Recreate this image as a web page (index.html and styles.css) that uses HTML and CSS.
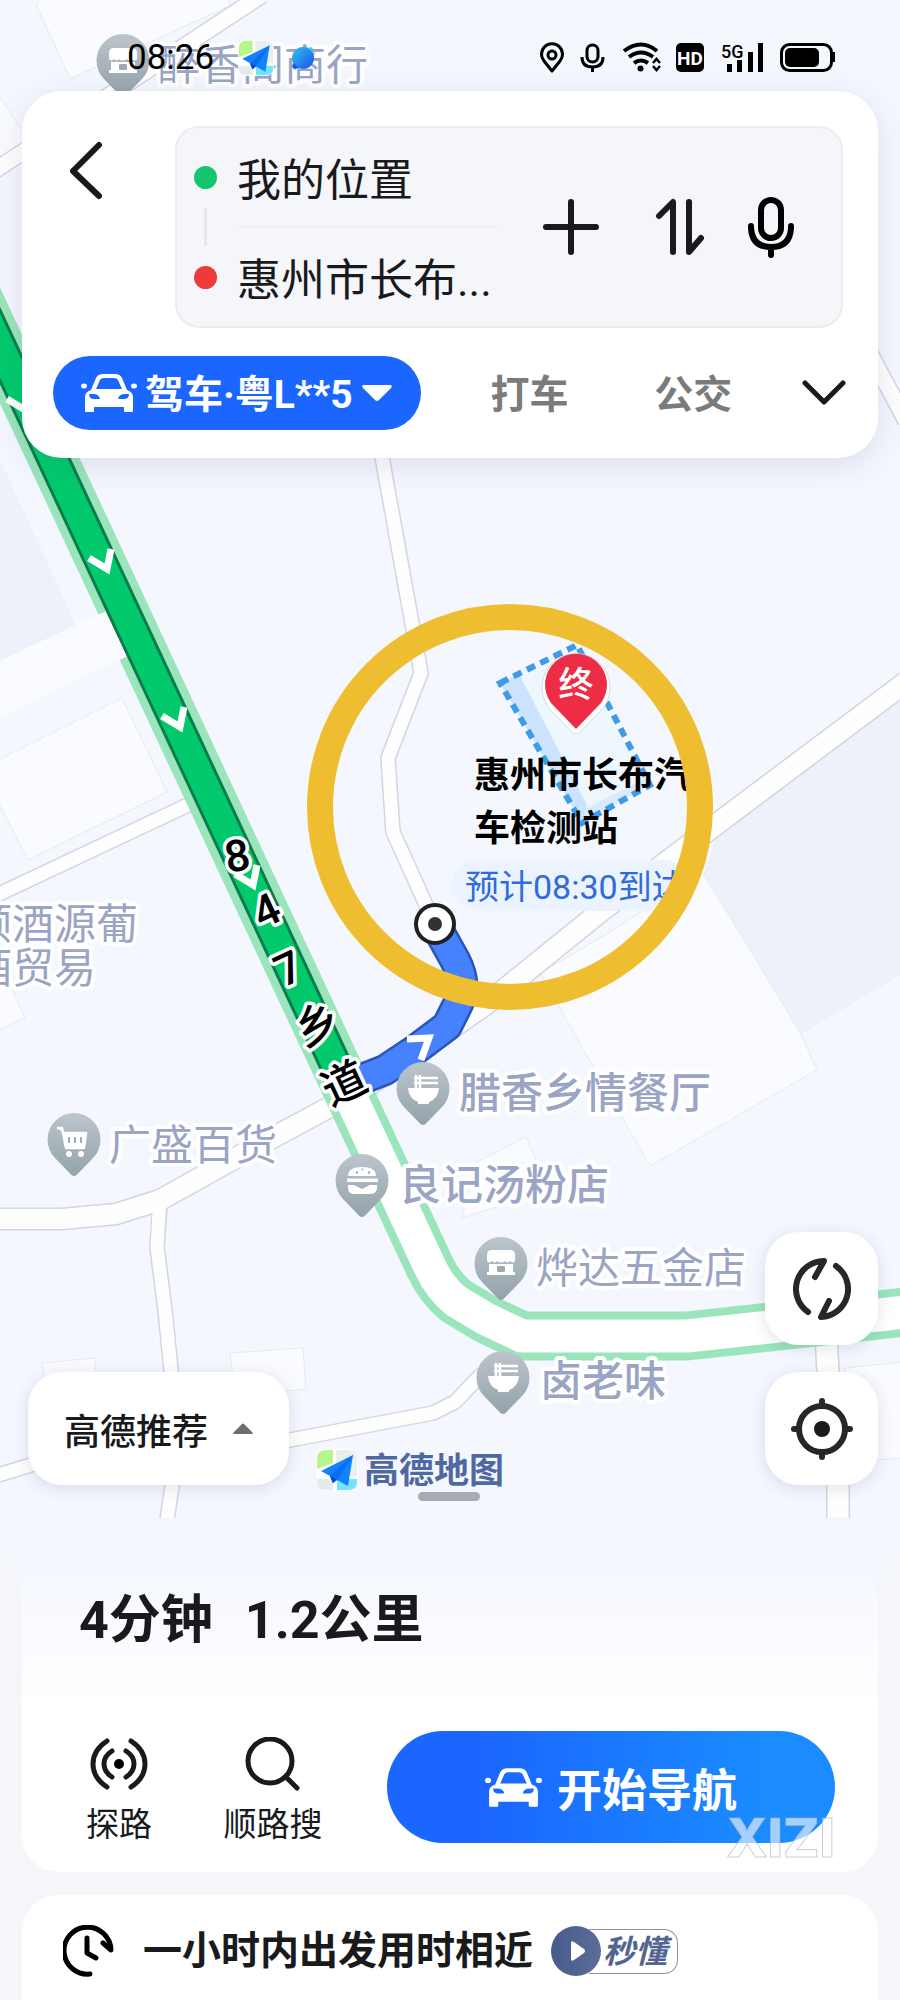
FILE: index.html
```html
<!DOCTYPE html>
<html lang="zh-CN">
<head>
<meta charset="utf-8">
<meta name="viewport" content="width=device-width, initial-scale=1">
<title>高德地图</title>
<link rel="stylesheet" href="styles.css">
</head>
<body>
<svg class="defs" aria-hidden="true">
  <defs>
    <linearGradient id="pinFill" x1="0" y1="0" x2="0" y2="1">
      <stop offset="0" stop-color="#bcc5cb"/><stop offset="1" stop-color="#93a2aa"/>
    </linearGradient>
    <linearGradient id="planetFill" x1="0" y1="0" x2="1" y2="1">
      <stop offset="0" stop-color="#2fc4ee"/><stop offset="1" stop-color="#1d50e8"/>
    </linearGradient>
    <symbol id="pin" viewBox="-28 -28 56 68" overflow="visible">
      <path d="M0 36C-1.500 36-2.500 35-3.500 34L-19 18A26.500 26.500 0 1 1 19 18L3.500 34C2.500 35 1.500 36 0 36Z" fill="url(#pinFill)"/>
    </symbol>
    <symbol id="shop" viewBox="-15 -15 30 30" overflow="visible">
      <path d="M-14-8q0-5 5-5H9q5 0 5 5v6q-2 3-5 0-3 3-5 0-4 3-8 0-2 3-5 0-3 3-5 0Z" fill="#fff"/>
      <path d="M-12 1H12V9H14V12H-14V9H-12Z" fill="#fff"/><rect x="-4" y="3" width="8" height="6" rx="1" fill="#9cabb3"/>
    </symbol>
    <symbol id="bowl" viewBox="-15 -15 30 30" overflow="visible">
      <path d="M-15-2H16Q15 9 6 12v2H-5v-2Q-14 9-15-2Z" fill="#fff"/>
      <path d="M-7-15V-2M-3-15V-2M-9-12H15M-9-7H15" stroke="#fff" stroke-width="2.500"/>
    </symbol>
    <symbol id="car" viewBox="0 0 56 40">
      <path fill-rule="evenodd" d="M10 17 15 5Q17 1 22 1H34Q39 1 41 5L46 17Q52 19 52 24V38Q52 39 51 39H44Q43 39 43 38V34H13V38Q13 39 12 39H5Q4 39 4 38V24Q4 19 10 17ZM15 16H41L37 7Q36 5 33 5H23Q20 5 19 7ZM8 21Q8 26 13 26H19Q18 21 12 21ZM48 21Q48 26 43 26H37Q38 21 44 21Z" fill="#fff"/>
      <ellipse cx="3" cy="13" rx="3" ry="2.500" fill="#fff"/><ellipse cx="53" cy="13" rx="3" ry="2.500" fill="#fff"/>
    </symbol>
    <symbol id="amap" viewBox="0 0 42 42">
      <rect width="42" height="42" rx="10" fill="#fff"/>
      <path d="M1 20V10Q1 1 10 1H17V14L1 20Z" fill="#b9f58d"/>
      <path d="M20 1H32Q41 1 41 10V27H20Z" fill="#e9eeee"/>
      <path d="M1 30H17V41H10Q1 41 1 33Z" fill="#e5eaea"/>
      <path d="M21 30H41V33Q41 41 32 41H21Z" fill="#77e2fb"/>
      <path d="M37 6 5 22 14 27 17 34 21 31 32 37Z" fill="#1182fa"/>
      <path d="M14 27 17 34 21 31 37 6Z" fill="#0a6cf0"/>
      <path d="M14 27 17 34 20 30Z" fill="#0a45d0"/>
    </symbol>
    <path id="chev" d="M-14-6 4 5 8-15" fill="none" stroke="#fff" stroke-width="7"/>
  </defs>
</svg>

<div class="screen">
  <main class="map">
    <svg class="map-canvas" viewBox="0 0 900 1518" preserveAspectRatio="xMidYMin slice" role="img" aria-label="路线地图">
      <g class="block">
        <path d="M36 4 44-2H228L231 5 70 79Z"/>
        <path d="M-2 95 22 130V150L-2 160Z"/>
        <path class="shade" d="M-2 455 60 590 75 625-2 662Z"/>
        <path d="M-2 760 122 698 167 792 28 860-2 802Z"/>
        <path d="M-2 958 25 1018-2 1030Z"/>
        <path class="shade" d="M703 873 725 818 902 700V974L801 1034Z"/>
        <path d="M540 973 600 938 703 873 801 1034 817 1070 650 1166Z"/>
        <path d="M475 1163 526 1137 550 1190 462 1218Z"/>
        <path d="M42 1363 95 1358 96 1410 50 1410Z"/>
        <path d="M230 1353 303 1348 306 1389 235 1395Z"/>
        <path d="M845 1368 902 1362V1458L850 1462Z"/>
      </g>
      <g class="street-edge">
        <path class="w16" d="M262-5-6 171"/>
        <path class="w16" d="M866 346 906 421"/>
        <path class="w14" d="M-5 896 190 804"/>
        <path class="w14" d="M380 446 406 590 421 673 388 758 393 832 432 918"/>
        <path class="w20" d="M906 682 750 799 600 912 485 1005 365 1088 250 1150 160 1200 116 1214 62 1219H-5"/>
        <path class="w14" d="M160 1204 157 1247 165 1310 172 1380 174 1440 172 1486 167 1520"/>
        <path class="w14" d="M-5 1476 80 1450 180 1458 290 1440 433 1413 455 1402 480 1376 520 1355"/>
        <path class="w22" d="M826 1335 828 1372 838 1486 838 1520"/>
      </g>
      <g class="street">
        <path class="w16" d="M262-5-6 171"/>
        <path class="w16" d="M866 346 906 421"/>
        <path class="w14" d="M-5 896 190 804"/>
        <path class="w14" d="M380 446 406 590 421 673 388 758 393 832 432 918"/>
        <path class="w20" d="M906 682 750 799 600 912 485 1005 365 1088 250 1150 160 1200 116 1214 62 1219H-5"/>
        <path class="w14" d="M160 1196 157 1247 165 1310 172 1380 174 1440 172 1486 167 1520"/>
        <path class="w14" d="M-5 1476 80 1450 180 1458 290 1440 433 1413 455 1402 480 1376 520 1355"/>
        <path class="w22" d="M826 1335 828 1372 838 1486 838 1520"/>
      </g>
      <g class="line">
        <path stroke="#9ae5bb" stroke-width="49" d="M-73 189 360 1117 402 1207 430 1267Q440 1288 456 1301L486 1319 522 1336H687L906 1312"/>
        <path stroke="#fff" stroke-width="33" d="M-73 189 360 1117 402 1207 430 1267Q440 1288 456 1301L486 1319 522 1336H687L906 1312"/>
      </g>
      <path class="block-strip" d="M-2 662 108 610 130 655-2 718Z"/>
      <g class="line">
        <path stroke="#2b55b4" stroke-width="32" d="M435 924 455 960Q468 985 458 1004L447 1026 415 1050 385 1070 362 1079"/>
        <path stroke="#4682fd" stroke-width="27" d="M435 924 455 960Q468 985 458 1004L447 1026 415 1050 385 1070 362 1079"/>
        <path stroke="#077c4d" stroke-width="33" d="M-73 189 338 1070"/>
        <path stroke="#02ca6c" stroke-width="27" d="M-73 189 337 1068"/>
      </g>
      <use href="#chev" x="21" y="405"/><use href="#chev" x="103" y="564"/><use href="#chev" x="176" y="722"/><use href="#chev" x="249" y="880"/>
      <path d="M407 1039 429 1038 421 1060" fill="none" stroke="#fff" stroke-width="7"/>

      <g>
        <path d="M500 683 577 645 650 785 582 823Z" fill="#eef6fe"/>
        <path d="M500 683 519 674 587 805 582 823Z" fill="#cbe3fd"/>
        <path d="M582 823 587 808 646 778 650 785Z" fill="#d8eafd"/>
        <path d="M500 683 577 645 650 785 582 823Z" fill="none" stroke="#3f9be6" stroke-width="6" stroke-dasharray="9 6"/>
        <path d="M576 734Q573 734 571 731L548 707A34 34 0 1 1 604 707L581 731Q579 734 576 734Z" fill="#fff" stroke="#d9dde5" stroke-width="1"/>
        <path d="M576 729 551 703A31 31 0 1 1 601 703Z" fill="#ee2c45"/>
        <text class="end-mark" x="576" y="697" text-anchor="middle">终</text>
      </g>
      <g class="dest"><text x="474" y="788">惠州市长布汽</text><text x="474" y="841">车检测站</text></g>
      <rect x="452" y="860" width="238" height="51" rx="25" fill="#ebf4fe"/>
      <text class="eta" x="465" y="899">预计08:30到达</text>
      <circle cx="435" cy="924" r="19" fill="#fff" stroke="#1f2023" stroke-width="4"/><circle cx="435" cy="924" r="7" fill="#303236"/>
      <circle cx="510" cy="807" r="190" fill="none" stroke="#efbe30" stroke-width="26"/>

      <g class="road-name" text-anchor="middle">
        <text transform="translate(237 855) rotate(-10)" y="16">8</text>
        <text transform="translate(266 910) rotate(-25)" y="16">4</text>
        <text transform="translate(288 968) rotate(-25)" y="16">7</text>
        <text transform="translate(317 1024) rotate(-25)" y="16">乡</text>
        <text transform="translate(344 1083) rotate(-25)" y="16">道</text>
      </g>

      <g class="poi">
        <use href="#pin" x="95" y="33" width="56" height="68"/><use href="#shop" x="108" y="46" width="30" height="30"/>
        <text x="158" y="80">醉香阁商行</text>
        <text x="-30" y="939">顺酒源葡</text><text x="-30" y="983">酒贸易</text>
        <use href="#pin" x="46" y="1112" width="56" height="68"/>
        <path d="M57 1128h5l4 20h18l2-15H64" fill="#fff" stroke="#fff" stroke-width="2.500" stroke-linejoin="round"/>
        <path d="M69 1137v6M75 1137v6M81 1137v6" stroke="#9cabb3" stroke-width="2"/><circle cx="69" cy="1154" r="3" fill="#fff"/><circle cx="81" cy="1154" r="3" fill="#fff"/>
        <text x="109" y="1160">广盛百货</text>
        <use href="#pin" x="395" y="1061" width="56" height="68"/><use href="#bowl" x="408" y="1075" width="30" height="30"/>
        <text class="strong" x="459" y="1108">腊香乡情餐厅</text>
        <use href="#pin" x="334" y="1153" width="56" height="68"/>
        <path d="M348 1176Q348 1167 362 1167T376 1176ZM347 1178.500H378V1182H347ZM348 1185H354L362 1189 370 1185H377Q378 1194 370 1194H354Q347 1194 348 1185Z" fill="#fff"/>
        <path d="M356 1173l2-1M362 1170l1-1M368 1173l2-1" stroke="#9cabb3" stroke-width="2"/>
        <text class="strong" x="399" y="1200">良记汤粉店</text>
        <use href="#pin" x="473" y="1236" width="56" height="68"/><use href="#shop" x="486" y="1248" width="30" height="30"/>
        <text x="536" y="1283">烨达五金店</text>
        <use href="#pin" x="475" y="1350" width="56" height="68"/><use href="#bowl" x="488" y="1363" width="30" height="30"/>
        <text class="strong" x="540" y="1396">卤老味</text>
      </g>
    </svg>

    <header class="status">
      <time class="clock">08:26</time>
      <svg width="36" height="36" viewBox="0 0 42 42" aria-hidden="true"><use href="#amap"/></svg>
      <svg class="planet" width="26" height="26" viewBox="0 0 26 26" aria-hidden="true"><circle cx="13" cy="13" r="11" fill="url(#planetFill)"/><path d="M18 3Q24 0 23 8Z" fill="#38c8ef"/><path d="M3 18Q0 26 9 23Z" fill="#1d55e8"/></svg>
      <svg class="status-icons" width="296" height="32" viewBox="540 42 296 32" role="img" aria-label="定位 麦克风 无线网 HD 5G 电量">
        <g fill="none" stroke="#000" stroke-width="3">
          <path d="M552 71 544 61A10.500 10.500 0 1 1 560 61Z" stroke-linejoin="round"/><circle cx="552" cy="55" r="4"/>
          <rect x="587" y="45" width="11" height="17" rx="5.500"/><path d="M582 57Q582 67 592.500 67T603 57M592.500 67V72"/>
          <path d="M624 51Q641 38 657 51" stroke-width="4"/><path d="M629 57Q641 48 653 57M634 63Q641 58 648 63" stroke-width="4"/>
          <path d="M653 63l3.500-4 3.500 4M653 66l3.500 4 3.500-4" stroke-width="2.500"/>
          <rect x="781.500" y="44.500" width="50" height="26" rx="8"/>
        </g>
        <circle cx="640.500" cy="68.500" r="3"/>
        <rect x="676" y="43" width="28" height="29" rx="5"/><text class="hd" x="690" y="65" text-anchor="middle">HD</text>
        <text class="fiveg" x="721" y="58">5G</text>
        <path d="M727 64h5v8h-5ZM737 60h5v12h-5ZM748 52h5v20h-5ZM758 43h5v29h-5Z"/>
        <rect x="785" y="48" width="34" height="19" rx="5"/><path d="M833 52h2v10h-2Z"/>
      </svg>
    </header>

    <section class="route-card" aria-label="路线规划">
      <div class="route-top">
        <button class="icon-btn back" type="button" aria-label="返回"><svg width="34" height="60" viewBox="0 0 34 60"><path d="M30 4 4 30 30 55"/></svg></button>
        <div class="route-box">
          <div class="points">
            <label class="point"><span class="dot start"></span><input type="text" aria-label="起点" value="我的位置"></label>
            <div class="joiner"></div>
            <label class="point"><span class="dot end"></span><input type="text" aria-label="终点" value="惠州市长布..."></label>
          </div>
          <div class="tools">
            <button class="icon-btn" type="button" aria-label="添加途经点"><svg width="56" height="62" viewBox="0 0 56 62"><path d="M28 6V56M3 31H53"/></svg></button>
            <button class="icon-btn" type="button" aria-label="交换起终点"><svg width="50" height="62" viewBox="0 0 50 62"><path d="M4 20 18 6V56M34 6V56L46 42"/></svg></button>
            <button class="icon-btn voice" type="button" aria-label="语音"><svg width="46" height="62" viewBox="0 0 46 62"><rect x="13" y="4" width="20" height="38" rx="10"/><path d="M3 30V32Q4 51 23 51T43 32V30M23 51V59"/></svg></button>
          </div>
        </div>
      </div>
      <nav class="modes" aria-label="出行方式">
        <button class="mode active" type="button"><svg width="56" height="40"><use href="#car"/></svg><span>驾车·粤L**5</span><svg class="caret" width="32" height="18" viewBox="0 0 32 18"><path d="M3 1H29Q32 1 30 4L18 16Q16 18 14 16L2 4Q0 1 3 1Z"/></svg></button>
        <button class="mode taxi" type="button"><span>打车</span></button>
        <button class="mode" type="button"><span>公交</span></button>
        <button class="icon-btn more" type="button" aria-label="更多"><svg width="44" height="28" viewBox="0 0 44 28"><path d="M3 4 22 23 41 4"/></svg></button>
      </nav>
    </section>

    <div class="map-controls">
      <button class="float-btn recommend" type="button">高德推荐<svg width="20" height="11" viewBox="0 0 20 11"><path d="M1 11Q-1 11 1 9L9 1Q10 0 11 1L19 9Q21 11 19 11Z"/></svg></button>
      <div class="brand"><svg width="42" height="42"><use href="#amap"/></svg><span>高德地图</span></div>
      <div class="float-col">
        <button class="float-btn square" type="button" aria-label="刷新路线"><svg width="62" height="62" viewBox="0 0 62 62"><path d="M17 54A28 28 0 0 1 33 3L24 19M45 8A28 28 0 0 1 30 59L38 43"/></svg></button>
        <button class="float-btn square" type="button" aria-label="定位"><svg width="62" height="62" viewBox="0 0 62 62"><circle cx="31" cy="31" r="23"/><path d="M31 3V8M31 54V59M3 31H8M54 31H59"/><circle class="core" cx="31" cy="31" r="8"/></svg></button>
      </div>
    </div>
    <div class="handle"></div>
  </main>

  <section class="sheet">
    <article class="panel summary">
      <h1><span>4分钟</span><span>1.2公里</span></h1>
      <div class="actions">
        <button class="action" type="button"><svg width="58" height="54" viewBox="0 0 58 54"><path d="M17 4Q3 13 3 27T17 50M41 4Q55 13 55 27T41 50M22 14Q14 19 14 27T22 40M36 14Q44 19 44 27T36 40"/><circle cx="29" cy="27" r="5"/></svg>探路</button>
        <button class="action wide" type="button"><svg width="58" height="54" viewBox="0 0 58 54"><circle class="ring" cx="26" cy="24" r="22"/><path d="M42 40 53 51"/></svg>顺路搜</button>
        <button class="go" type="button"><svg width="57" height="41" viewBox="0 0 56 40"><use href="#car"/></svg>开始导航</button>
      </div>
      <span class="watermark">XIZI</span>
    </article>
    <article class="panel tip">
      <svg class="clock-icon" width="52" height="52" viewBox="0 0 52 52" aria-hidden="true"><path d="M27 49A23.500 23.500 0 1 1 48 25L40 18M24 13V28L33 33" /></svg>
      <strong>一小时内出发用时相近</strong>
      <a class="badge" href="#"><span class="play"><svg width="16" height="22" viewBox="0 0 16 22"><path d="M1 3Q1 0 4 2L14 9Q16 11 14 13L4 20Q1 22 1 19Z"/></svg></span><span class="badge-text">秒懂</span></a>
    </article>
  </section>
</div>
</body>
</html>
```

FILE: styles.css
```css
* { box-sizing: border-box; }
body {
  margin: 0;
  background: #f4f6f9;
  color: #191a1c;
  font-family: Roboto, "Noto Sans CJK SC", sans-serif;
}
button, input { font: inherit; color: inherit; border: 0; padding: 0; background: none; }
button { display: flex; align-items: center; justify-content: center; cursor: pointer; }
svg { display: block; flex: none; }
.defs { position: absolute; width: 0; height: 0; }

.screen { display: flex; flex-direction: column; min-height: 100vh; }

/* Map */
.map { position: relative; flex: 1; display: flex; flex-direction: column; overflow: hidden; background: #f4f7fe; }
.map-canvas { position: absolute; inset: 0; width: 100%; height: 100%; }
.block path, .block-strip { fill: #f9fbff; stroke: #e7e9f2; stroke-width: 1; }
.block-strip { stroke: none; }
.block .shade { fill: #edf1fa; stroke: none; }
.street-edge path, .street path, .line path { fill: none; stroke-linejoin: round; }
.street-edge path { stroke: #d3d5e2; }
.street path { stroke: #fefefe; }
.street-edge .w14 { stroke-width: 16; }
.street-edge .w16 { stroke-width: 18; }
.street-edge .w20 { stroke-width: 23; }
.street-edge .w22 { stroke-width: 24; }
.street .w14 { stroke-width: 13; }
.street .w16 { stroke-width: 15; }
.street .w20 { stroke-width: 20; }
.street .w22 { stroke-width: 21; }
.end-mark { font-size: 35px; font-weight: 500; fill: #fff; }
.dest { font-size: 36px; font-weight: 700; fill: #000; }
.eta { font-size: 34px; fill: #2f6bdc; }
.road-name { font-size: 44px; font-weight: 500; fill: #000; stroke: #fff; stroke-width: 7px; stroke-linejoin: round; paint-order: stroke; }
.poi text { font-size: 42px; fill: #9aa4c5; stroke: #fff; stroke-width: 8px; stroke-linejoin: round; paint-order: stroke; }
.poi .strong { font-weight: 500; }

/* Status bar */
.status { position: relative; display: flex; align-items: center; height: 91px; padding: 24px 64px 0 127px; }
.clock { font-size: 35px; line-height: 40px; color: #000; margin-right: 24px; }
.planet { margin-left: 16px; }
.status-icons { margin-left: auto; }
.hd { font-size: 19px; font-weight: 700; fill: #fff; }
.fiveg { font-size: 18px; font-weight: 500; fill: #000; }

/* Route card */
.route-card {
  position: relative;
  margin: 0 22px;
  padding: 35px 35px 28px 31px;
  border-radius: 40px;
  background: #fff;
  box-shadow: 0 8px 32px rgba(60, 60, 110, .12);
}
.route-top { display: flex; align-items: flex-start; justify-content: space-between; }
.icon-btn path, .icon-btn rect { fill: none; stroke: #191a1c; stroke-width: 6; stroke-linecap: round; stroke-linejoin: round; }
.back { margin: 15px 0 0 16px; }
.route-box {
  display: flex;
  justify-content: space-between;
  flex: 1;
  margin-left: 72px;
  padding: 18px 47px 18px 17px;
  border: 2px solid #ebecef;
  border-radius: 24px;
  background: #f4f6fa;
}
.points { flex: 1; min-width: 0; }
.point { display: flex; align-items: center; gap: 20px; height: 62px; }
.point input { width: 100%; min-width: 0; height: 62px; font-size: 44px; line-height: 60px; outline: 0; }
.dot { flex: none; width: 23px; height: 23px; border-radius: 50%; }
.start { background: #16c56d; }
.end { background: #ee3a3a; }
.joiner { height: 38px; margin-left: 10px; border-left: 3px solid #e5e7eb; background: linear-gradient(#edeff3, #edeff3) 32px 18px / 260px 2px no-repeat; }
.tools { display: flex; align-items: center; gap: 50px; }
.tools .icon-btn + .icon-btn { margin-left: 6px; }
.tools .voice.voice { margin-left: -7px; }
.voice path, .voice rect { stroke: #000; }
.modes { display: flex; align-items: center; justify-content: space-between; margin-top: 28px; }
.mode { height: 74px; font-size: 39px; font-weight: 700; line-height: 56px; color: #7b7b7b; }
.mode span { padding-top: 4px; }
.mode.active { gap: 8px; padding: 0 28px; border-radius: 37px; background: #1b66ff; color: #fff; }
.taxi { margin-right: 16px; }
.caret { fill: #fff; }
.more { margin-right: -3px; }
.more path { stroke-width: 5; }

/* Map controls */
.map-controls { position: relative; display: flex; align-items: flex-end; margin-top: auto; padding: 0 22px 27px 28px; }
.float-btn { height: 113px; border-radius: 34px; background: #fff; box-shadow: 0 3px 16px rgba(60, 60, 100, .14); }
.recommend { gap: 25px; width: 261px; margin-bottom: 6px; font-size: 36px; font-weight: 500; }
.recommend svg { fill: #6e6e6e; }
.brand { display: flex; align-items: center; gap: 6px; margin-left: 27px; height: 42px; font-size: 35px; font-weight: 700; line-height: 42px; color: #5068a0; }
.brand span { padding-top: 4px; }
.float-col { display: grid; gap: 27px; margin: 0 0 6px auto; }
.square { width: 113px; }
.square path, .square circle { fill: none; stroke: #26272a; stroke-width: 6; stroke-linecap: round; stroke-linejoin: round; }
.square .core { fill: #191a1c; stroke: none; }
.handle { position: absolute; left: 50%; bottom: 17px; width: 62px; height: 9px; margin-left: -32px; border-radius: 5px; background: #a9aab2; }

/* Bottom sheet */
.sheet { display: grid; gap: 23px; padding: 0 22px; background: linear-gradient(#f4f7fe, #f4f6f9 80px); }
.panel { background: #fff; }
.summary { position: relative; padding: 65px 43px 29px 57px; border-radius: 0 0 36px 36px; background: linear-gradient(#f3f6ff 0, #f3f6ff 24px, #fff 190px); }
h1 { display: flex; gap: 32px; margin: 0 0 72px; font-size: 52px; font-weight: 700; line-height: 76px; }
.actions { display: flex; align-items: center; }
.action { flex-direction: column; gap: 16px; width: 80px; padding-top: 6px; font-size: 33px; line-height: 36px; }
.action.wide { width: 104px; margin-left: 62px; }
.action path, .ring { fill: none; stroke: #191a1c; stroke-width: 5; stroke-linecap: round; }
.go { flex: 1; gap: 15px; height: 112px; margin-left: 62px; border-radius: 56px; background: linear-gradient(90deg, #1b66ff 20%, #1a8cff 85%); color: #fff; font-size: 45px; font-weight: 700; }
.watermark { position: absolute; right: 43px; bottom: 4px; font: 800 54px/60px Inter, sans-serif; color: rgba(255, 255, 255, .6); -webkit-text-stroke: 1px rgba(170, 175, 185, .6); pointer-events: none; }
.tip { display: flex; align-items: center; padding: 30px 41px 23px; border-radius: 36px 36px 0 0; }
.clock-icon path { fill: none; stroke: #000; stroke-width: 5; stroke-linecap: round; stroke-linejoin: round; }
.tip strong { margin-left: 28px; font-size: 39px; font-weight: 700; line-height: 52px; }
.badge { display: flex; align-items: center; margin-left: 18px; text-decoration: none; color: #53658f; }
.play { display: grid; place-items: center; width: 50px; height: 50px; border-radius: 50%; background: linear-gradient(90deg, #465c8b, #5b6d99); }
.play svg { fill: #fff; margin-left: 4px; }
.badge-text { height: 45px; margin-left: -12px; padding: 0 10px 0 14px; border: 1px solid #8a93a8; border-left: 0; border-radius: 0 14px 14px 0; font-size: 32px; font-weight: 700; font-style: italic; line-height: 45px; }
```
